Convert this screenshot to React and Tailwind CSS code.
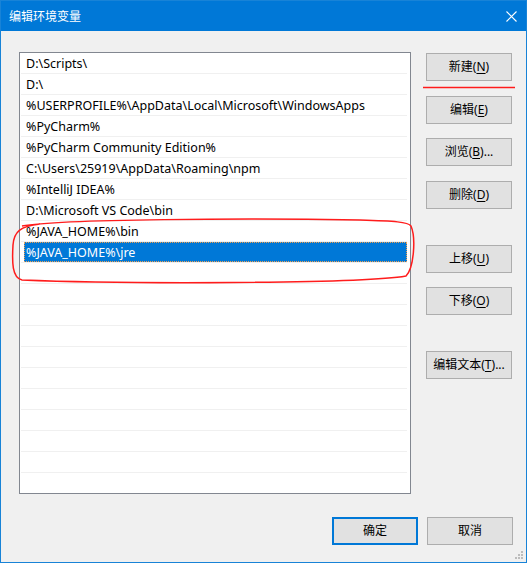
import React from "react";

const rows = [
  "D:\\Scripts\\",
  "D:\\",
  "%USERPROFILE%\\AppData\\Local\\Microsoft\\WindowsApps",
  "%PyCharm%",
  "%PyCharm Community Edition%",
  "C:\\Users\\25919\\AppData\\Roaming\\npm",
  "%IntelliJ IDEA%",
  "D:\\Microsoft VS Code\\bin",
  "%JAVA_HOME%\\bin",
  "%JAVA_HOME%\\jre",
];

const font = { fontFamily: '"Noto Sans", "Noto Sans CJK SC", sans-serif' };

function Btn({ label, k, suffix = "", className = "" }) {
  return (
    <div
      className={
        "w-[86px] h-[28px] flex items-center justify-center bg-[#e1e1e1] border border-[#adadad] text-[12px] text-black leading-none " +
        className
      }
    >
      <span>
        {label}
        {k ? (
          <>
            (<span className="underline underline-offset-2">{k}</span>)
          </>
        ) : null}
        {suffix}
      </span>
    </div>
  );
}

export default function App() {
  const all = [...rows];
  while (all.length < 21) all.push("");
  return (
    <div
      className="relative w-[527px] h-[563px] bg-[#f0f0f0] border border-[#1883d7] flex flex-col overflow-hidden"
      style={font}
    >
      {/* title bar */}
      <div className="h-[30px] bg-[#0078d7] flex items-center justify-between pl-[8px] pr-[9px] shrink-0">
        <span className="text-white text-[12px] leading-none" style={{ fontFamily: '"Noto Sans CJK SC", sans-serif' }}>
          编辑环境变量
        </span>
        <svg width="11" height="11" viewBox="0 0 11 11">
          <path d="M0.5 0.5 L10.5 10.5 M10.5 0.5 L0.5 10.5" stroke="white" strokeWidth="1.1" />
        </svg>
      </div>

      {/* body */}
      <div className="flex pl-[18px] pt-[21px]">
        <div className="w-[392px] h-[442px] bg-white border border-[#828790] overflow-hidden">
          {all.map((t, i) => {
            const selected = i === 9;
            return (
              <div key={i} className="h-[21px] flex flex-col">
                <div className="h-[20px] flex items-center pr-[1px] text-[12.5px] leading-none">
                  {selected ? (
                    <div className="ml-[4px] w-[383px] h-[20px] bg-[#0078d7] text-white flex items-center pl-[1px] pt-[2px] border border-dotted border-[#f0a050]">
                      {t}
                    </div>
                  ) : (
                    <div className="pl-[6px] pt-[2px] text-black whitespace-nowrap">{t}</div>
                  )}
                </div>
                <div className="h-[1px] ml-[1px] mr-[3px] bg-[#f0f0f0]" />
              </div>
            );
          })}
        </div>

        <div className="ml-[15px] pt-[1px] flex flex-col">
          <Btn label="新建" k="N" />
          <Btn label="编辑" k="E" className="mt-[15px]" />
          <Btn label="浏览" k="B" suffix="..." className="mt-[14px]" />
          <Btn label="删除" k="D" className="mt-[15px]" />
          <Btn label="上移" k="U" className="mt-[36px]" />
          <Btn label="下移" k="O" className="mt-[14px]" />
          <Btn label="编辑文本" k="T" suffix="..." className="mt-[36px]" />
        </div>
      </div>

      <div className="flex justify-end gap-[9px] pr-[13px] mt-[23px]">
        <div className="w-[86px] h-[28px] flex items-center justify-center bg-[#e1e1e1] border-2 border-[#0078d7] text-[12px] text-black">
          确定
        </div>
        <Btn label="取消" />
      </div>

      {/* resize grip */}
      <svg className="absolute right-[2px] bottom-[2px]" width="9" height="9" viewBox="0 0 9 9">
        {[
          [7, 1],
          [4, 4],
          [7, 4],
          [1, 7],
          [4, 7],
          [7, 7],
        ].map(([x, y], i) => (
          <rect key={i} x={x - 1} y={y - 1} width="2" height="2" fill="#bcbcbc" />
        ))}
      </svg>

      {/* annotations */}
      <svg className="absolute left-[-1px] top-[-1px] pointer-events-none" width="527" height="563" viewBox="0 0 527 563">
        <path d="M423 87.5 L515 87.5" stroke="#ff1c1c" strokeWidth="1.5" />
        <path
          d="M22 226 C 60 219, 250 218, 360 220 C 395 221, 408 222, 411 226 C 416 238, 414 268, 406 276 C 360 284, 120 284, 22 280 C 12 278, 12 262, 13 245 C 14 232, 20 226, 40 224"
          stroke="#ff1c1c"
          strokeWidth="1.5"
          fill="none"
        />
      </svg>
    </div>
  );
}
